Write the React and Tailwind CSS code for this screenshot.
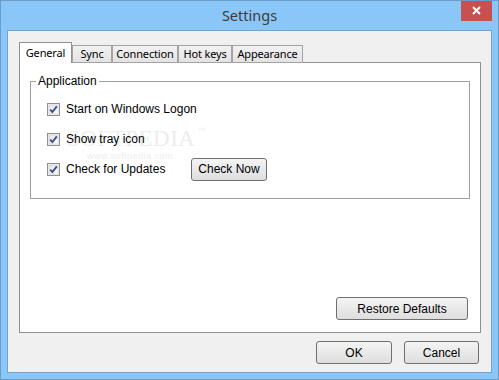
export default function App() {
  const ui = "font-['Segoe_UI','Noto_Sans',sans-serif]";
  const ar = "font-['Liberation_Sans',Arial,sans-serif]";

  const Check = () => (
    <svg width="13" height="13" viewBox="0 0 13 13" className="shrink-0">
      <defs>
        <linearGradient id="cbg" x1="0" y1="0" x2="1" y2="1">
          <stop offset="0" stopColor="#e4e4e4" />
          <stop offset="1" stopColor="#ffffff" />
        </linearGradient>
      </defs>
      <rect x="0.5" y="0.5" width="12" height="12" fill="#f4f4f4" stroke="#8e8f8f" />
      <rect x="2" y="2" width="9" height="9" fill="url(#cbg)" stroke="#c9c9c9" strokeWidth="0.6" />
      <path d="M3.2 6.6 L5.4 9 L9.8 3.4" fill="none" stroke="#3d4f91" strokeWidth="1.9" />
    </svg>
  );

  const Btn = ({ children, className }) => (
    <button
      className={
        "h-[23px] shrink-0 rounded-[3px] border border-[#707070] bg-linear-to-b from-[#f4f4f4] to-[#dedede] text-[12px] leading-none text-black flex items-center justify-center font-['Liberation_Sans',Arial,sans-serif] " +
        className
      }
    >
      {children}
    </button>
  );

  const tabs = [
    ["Sync", "w-[40px]"],
    ["Connection", "w-[66px]"],
    ["Hot keys", "w-[54px]"],
    ["Appearance", "w-[71px]"],
  ];

  return (
    <div className="w-[499px] h-[380px] bg-[#8bc6f8] border border-[#6a9cc8] flex flex-col px-[6px] pb-[6px] overflow-hidden">
      {/* title bar */}
      <div className="h-[29px] shrink-0 grid grid-cols-[1fr_auto_1fr] -mx-[6px]">
        <div />
        <div className={"self-center text-[14.5px] leading-none text-[#3b3b3b] pb-[1px] " + ui}>Settings</div>
        <div className="flex justify-end pr-[6px]">
          <div className="w-[31px] h-[21px] -mt-px bg-[#c75050] flex items-center justify-center">
            <svg width="9" height="9" viewBox="0 0 9 9">
              <path d="M1 1 L8 8 M8 1 L1 8" stroke="#ffffff" strokeWidth="2" />
            </svg>
          </div>
        </div>
      </div>

      {/* client */}
      <div className="w-[485px] h-[343px] border border-[#75a3cc] bg-[#f0f0f0] flex flex-col pt-[11px] pl-[11px] pr-[10px] pb-[8px]">
        {/* tabs */}
        <div className={"h-[21px] flex items-end relative z-10 text-[11px] tracking-[-0.15px] text-black " + ui}>
          <div className="h-[21px] w-[53px] bg-white border border-b-0 border-[#8e9096] flex justify-center pt-[2px] leading-[16px]">
            General
          </div>
          {tabs.map(([t, w]) => (
            <div
              key={t}
              className={
                "h-[18px] border border-[#a3a3a3] bg-linear-to-b from-[#f2f2f2] to-[#e3e3e3] flex justify-center leading-[16px] whitespace-nowrap " +
                w
              }
            >
              {t}
            </div>
          ))}
        </div>

        {/* panel */}
        <div className="-mt-px h-[271px] bg-white border border-[#8e9096] flex flex-col">
          <fieldset className="mt-[11px] mx-[10px] h-[125px] border border-[#a0a0a0] px-0 pb-0">
            <legend className={"ml-[5px] px-[2px] text-[12px] leading-[14px] text-black " + ar}>Application</legend>
            <div className={"relative pt-[10px] pl-[16px] flex flex-col gap-[8px] text-[12px] text-black " + ar}>
              <div className="absolute left-[36px] top-[39px] pointer-events-none select-none text-[#ededed] leading-none">
                <span className="font-['Liberation_Serif',serif] text-[23px] tracking-[0.5px]">SOFTPEDIA</span>
                <span className="align-top text-[8px] ml-[2px]">™</span>
                <div className="text-[9px] ml-[20px] mt-[2px] tracking-[0.5px]">www.softpedia.com</div>
              </div>
              <div className="relative h-[22px] flex items-center">
                <Check />
                <span className="ml-[6px]">Start on Windows Logon</span>
              </div>
              <div className="relative h-[22px] flex items-center">
                <Check />
                <span className="ml-[6px]">Show tray icon</span>
              </div>
              <div className="relative h-[22px] flex items-center">
                <Check />
                <span className="ml-[6px] w-[125px]">Check for Updates</span>
                <Btn className="w-[76px]">Check Now</Btn>
              </div>
            </div>
          </fieldset>
          <div className="mt-auto mb-[12px] mr-[12px] flex justify-end">
            <Btn className="w-[132px]">Restore Defaults</Btn>
          </div>
        </div>

        {/* bottom buttons */}
        <div className="mt-[8px] mr-[2px] flex justify-end gap-[12px]">
          <Btn className="w-[76px]">OK</Btn>
          <Btn className="w-[75px]">Cancel</Btn>
        </div>
      </div>
    </div>
  );
}
